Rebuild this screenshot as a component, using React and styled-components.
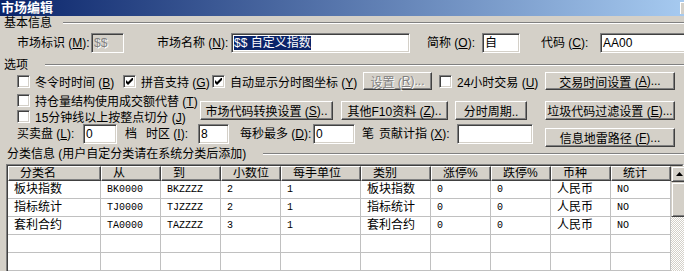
import styled, { createGlobalStyle } from "styled-components";

const GlobalStyle = createGlobalStyle`
  html, body {
    margin: 0;
    padding: 0;
    background: #d4d0c8;
    overflow: hidden;
  }
  body {
    font-family: "Liberation Sans", "Noto Sans CJK SC", sans-serif;
    font-size: 12px;
    color: #000;
  }
`;

const Window = styled.div`
  width: 684px;
  height: 271px;
  overflow: hidden;
  background: #d4d0c8;
`;

const TitleBar = styled.div`
  height: 16px;
  display: flex;
  justify-content: space-between;
  align-items: center;
  background: linear-gradient(90deg, #0a246a 0%, #a6caf0 100%);
  overflow: hidden;
`;

const Title = styled.span`
  color: #fff;
  font-weight: bold;
  font-size: 13px;
  line-height: 16px;
  padding-left: 1px;
`;

const TitleButton = styled.span`
  flex: none;
  align-self: flex-start;
  width: 16px;
  height: 12px;
  margin-top: 2px;
  margin-right: -12px;
  box-sizing: border-box;
  background: #d4d0c8;
  border-left: 1px solid #fff;
  border-top: 1px solid #fff;
`;

const GroupHead = styled.div`
  display: flex;
  align-items: center;
  height: ${(p) => p.$h || 14}px;
  margin-top: ${(p) => p.$mt || 0}px;
  padding-left: ${(p) => p.$pl || 4}px;
`;

const GroupLabel = styled.span`
  flex: none;
  width: ${(p) => p.$w}px;
  white-space: nowrap;
  line-height: 14px;
`;

const Etched = styled.div`
  flex: 1;
  border-top: 1px solid #808080;
  border-bottom: 1px solid #fff;
`;

const FieldRow = styled.div`
  display: flex;
  align-items: ${(p) => p.$align || "center"};
  height: ${(p) => p.$h || 20}px;
  margin-top: ${(p) => p.$mt || 0}px;
  padding-left: 17px;
`;

const Label = styled.span`
  flex: none;
  width: ${(p) => p.$w}px;
  margin-left: ${(p) => p.$ml || 0}px;
  white-space: nowrap;
  line-height: 20px;
`;

const TextBox = styled.div`
  flex: none;
  width: ${(p) => p.$w}px;
  height: 20px;
  box-sizing: border-box;
  padding: 0 2px;
  background: ${(p) => (p.$disabled ? "#d4d0c8" : "#fff")};
  color: ${(p) => (p.$disabled ? "#808080" : "#000")};
  text-shadow: ${(p) => (p.$disabled ? "1px 1px 0 #fff" : "none")};
  border: 1px solid;
  border-color: #808080 #fff #fff #808080;
  box-shadow: inset 1px 1px #404040, inset -1px -1px #d4d0c8;
  line-height: 18px;
  white-space: nowrap;
  overflow: hidden;
`;

const Selected = styled.span`
  background: #0a246a;
  color: #fff;
`;

const Button = styled.div`
  flex: none;
  width: ${(p) => p.$w}px;
  height: ${(p) => p.$h || 19}px;
  margin-left: ${(p) => p.$ml || 0}px;
  margin-top: ${(p) => p.$mt || 0}px;
  box-sizing: border-box;
  display: flex;
  align-items: center;
  justify-content: center;
  background: #d4d0c8;
  border: 1px solid;
  border-color: #fff #404040 #404040 #fff;
  box-shadow: inset -1px -1px #808080;
  white-space: nowrap;
  color: ${(p) => (p.$disabled ? "#808080" : "#000")};
  text-shadow: ${(p) => (p.$disabled ? "1px 1px 0 #fff" : "none")};
`;

const CheckItem = styled.label`
  flex: none;
  display: flex;
  align-items: center;
  gap: 5px;
  width: ${(p) => p.$w}px;
  margin-left: ${(p) => p.$ml || 0}px;
  height: ${(p) => p.$h || 16}px;
`;

const CheckText = styled.span`
  white-space: nowrap;
`;

const Box = styled.span`
  flex: none;
  width: 13px;
  height: 13px;
  box-sizing: border-box;
  background: #fff;
  border: 1px solid;
  border-color: #808080 #fff #fff #808080;
  box-shadow: inset 1px 1px #404040, inset -1px -1px #d4d0c8;
  display: flex;
  align-items: center;
  justify-content: center;
`;

const MiddleBlock = styled.div`
  display: flex;
  align-items: flex-start;
  margin-top: 2px;
  padding-left: 17px;
`;

const CheckColumn = styled.div`
  flex: none;
  width: 183px;
  display: flex;
  flex-direction: column;
`;

const ButtonRow = styled.div`
  display: flex;
  margin-top: 9px;
`;

const TableFrame = styled.div`
  margin: 4px 0 0 6px;
  border: 1px solid;
  border-color: #808080 #fff #fff #808080;
  height: 130px;
`;

const TableInner = styled.div`
  display: flex;
  height: 100%;
  border: 1px solid;
  border-color: #404040 #d4d0c8 #d4d0c8 #404040;
  background: #fff;
`;

const Grid = styled.div`
  flex: none;
  display: grid;
  grid-template-columns: 93px 60px 60px 60px 80px 70px 60px 60px 60px 60px;
  grid-auto-rows: 18px;
  grid-template-rows: 15px;
  align-content: start;
`;

const HeadCell = styled.div`
  box-sizing: border-box;
  background: #d4d0c8;
  border: 1px solid;
  border-color: #fff #404040 #404040 #fff;
  box-shadow: inset -1px -1px #808080;
  padding-left: 11px;
  line-height: 13px;
  white-space: nowrap;
  overflow: hidden;
`;

const Cell = styled.div`
  box-sizing: border-box;
  border-right: 1px solid #c0c0c0;
  border-bottom: 1px solid #c0c0c0;
  padding-left: 6px;
  line-height: 17px;
  white-space: nowrap;
  overflow: hidden;
  font-family: ${(p) =>
    p.$mono ? '"Liberation Mono", monospace' : "inherit"};
  font-size: ${(p) => (p.$mono ? "10px" : "12px")};
`;

const Scrollbar = styled.div`
  flex: none;
  width: 16px;
  display: flex;
  flex-direction: column;
`;

const ScrollButton = styled.div`
  flex: none;
  height: ${(p) => p.$h}px;
  box-sizing: border-box;
  background: #d4d0c8;
  border: 1px solid;
  border-color: #d4d0c8 #404040 #404040 #d4d0c8;
  box-shadow: inset 1px 1px #fff, inset -1px -1px #808080;
  display: flex;
  align-items: center;
  justify-content: center;
`;

const Track = styled.div`
  flex: 1;
  background: repeating-conic-gradient(#d4d0c8 0 25%, #fff 0 50%) 0 0 / 2px 2px;
`;

function Check({ checked, w, ml, children }) {
  return (
    <CheckItem $w={w} $ml={ml}>
      <Box>
        {checked && (
          <svg width="7" height="7" viewBox="0 0 7 7">
            <polygon points="0,2 2,4 7,-1 7,2 2,7 0,5" fill="#000" />
          </svg>
        )}
      </Box>
      <CheckText>{children}</CheckText>
    </CheckItem>
  );
}

const columns = ["分类名", "从", "到", "小数位", "每手单位", "类别", "涨停%", "跌停%", "币种", "统计"];

const rows = [
  ["板块指数", "BK0000", "BKZZZZ", "2", "1", "板块指数", "0", "0", "人民币", "NO"],
  ["指标统计", "TJ0000", "TJZZZZ", "2", "1", "指标统计", "0", "0", "人民币", "NO"],
  ["套利合约", "TA0000", "TAZZZZ", "3", "1", "套利合约", "0", "0", "人民币", "NO"],
  ["", "", "", "", "", "", "", "", "", ""],
  ["", "", "", "", "", "", "", "", "", ""],
  ["", "", "", "", "", "", "", "", "", ""],
];

const isMono = (v) => /^[A-Z0-9]+$/.test(v);

export default function App() {
  return (
    <Window>
      <GlobalStyle />
      <TitleBar>
        <Title>市场编辑</Title>
        <TitleButton />
      </TitleBar>

      <GroupHead>
        <GroupLabel $w={59}>基本信息</GroupLabel>
        <Etched />
      </GroupHead>
      <FieldRow $mt={3}>
        <Label $w={74}>市场标识 (<u>M</u>):</Label>
        <TextBox $w={33} $disabled>$$</TextBox>
        <Label $w={74} $ml={33}>市场名称 (<u>N</u>):</Label>
        <TextBox $w={179}><Selected>$$ 自定义指数</Selected></TextBox>
        <Label $w={55} $ml={17}>简称 (<u>O</u>):</Label>
        <TextBox $w={38}>自</TextBox>
        <Label $w={59} $ml={21}>代码 (<u>C</u>):</Label>
        <TextBox $w={100}>AA00</TextBox>
      </FieldRow>

      <GroupHead $mt={5}>
        <GroupLabel $w={41}>选项</GroupLabel>
        <Etched />
      </GroupHead>
      <FieldRow $h={18}>
        <Check w={106}>冬令时时间 (<u>B</u>)</Check>
        <Check w={89} checked>拼音支持 (<u>G</u>)</Check>
        <Check w={151} checked>自动显示分时图坐标 (<u>Y</u>)</Check>
        <Button $w={69} $h={18} $disabled>设置 (<u>R</u>)...</Button>
        <Check w={106} ml={7}>24小时交易 (<u>U</u>)</Check>
        <Button $w={130} $h={18}>交易时间设置 (<u>A</u>)...</Button>
      </FieldRow>

      <MiddleBlock>
        <CheckColumn>
          <Check w={183}>持仓量结构使用成交额代替 (<u>T</u>)</Check>
          <Check w={183}>15分钟线以上按整点切分 (<u>J</u>)</Check>
        </CheckColumn>
        <ButtonRow>
          <Button $w={133}>市场代码转换设置 (<u>S</u>)..</Button>
          <Button $w={107} $ml={8}>其他F10资料 (<u>Z</u>)..</Button>
          <Button $w={72} $ml={7}>分时周期..</Button>
          <Button $w={130} $ml={18}>垃圾代码过滤设置 (<u>E</u>)...</Button>
        </ButtonRow>
      </MiddleBlock>

      <FieldRow $h={24} $align="flex-start">
        <Label $w={66}>买卖盘 (<u>L</u>):</Label>
        <TextBox $w={34}>0</TextBox>
        <Label $w={21} $ml={8}>档</Label>
        <Label $w={52}>时区 (<u>I</u>):</Label>
        <TextBox $w={31}>8</TextBox>
        <Label $w={73} $ml={11}>每秒最多 (<u>D</u>):</Label>
        <TextBox $w={42}>0</TextBox>
        <Label $w={17} $ml={7}>笔</Label>
        <Label $w={78}>贡献计指 (<u>X</u>):</Label>
        <TextBox $w={76} />
        <Button $w={130} $ml={12} $mt={4}>信息地雷路径 (<u>F</u>)...</Button>
      </FieldRow>

      <GroupHead $h={12} $pl={7}>
        <GroupLabel $w={256}>分类信息 (用户自定分类请在系统分类后添加)</GroupLabel>
        <Etched />
      </GroupHead>

      <TableFrame>
        <TableInner>
          <Grid>
            {columns.map((c) => (
              <HeadCell key={c}>{c}</HeadCell>
            ))}
            {rows.map((r, i) =>
              r.map((v, j) => (
                <Cell key={i + "-" + j} $mono={isMono(v)}>{v}</Cell>
              ))
            )}
          </Grid>
          <Scrollbar>
            <ScrollButton $h={16}>
              <svg width="7" height="4" viewBox="0 0 7 4">
                <polygon points="3.5,0 7,4 0,4" fill="#000" />
              </svg>
            </ScrollButton>
            <ScrollButton $h={35} />
            <Track />
          </Scrollbar>
        </TableInner>
      </TableFrame>
    </Window>
  );
}
